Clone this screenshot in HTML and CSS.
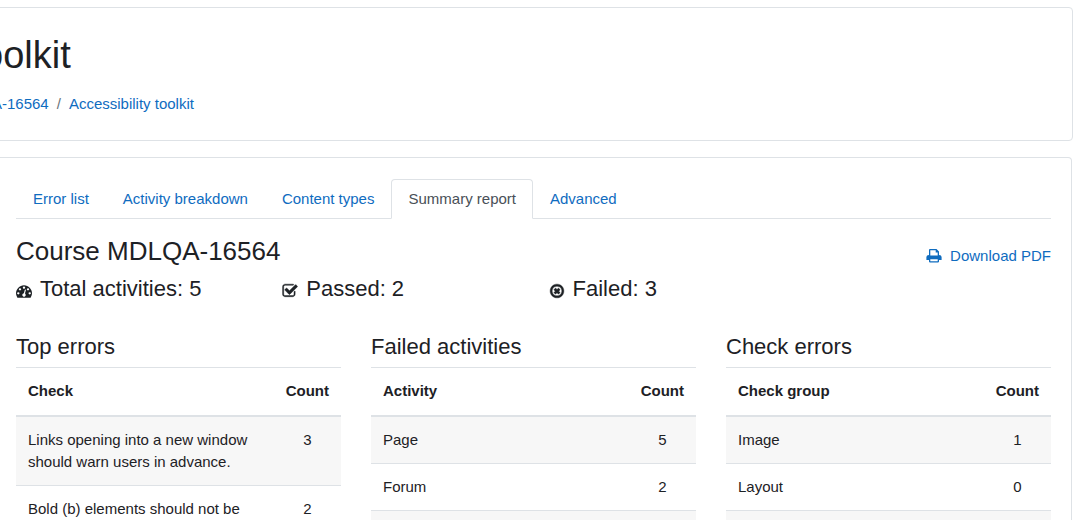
FILE: index.html
```html
<!DOCTYPE html>
<html lang="en">
<head>
<meta charset="utf-8">
<title>Accessibility toolkit</title>
<link rel="stylesheet" href="styles.css">
</head>
<body>
<header class="page-header">
  <h1 class="page-title">oolkit</h1>
  <nav class="breadcrumb" aria-label="Breadcrumb">
    <a href="#">A-16564</a><span class="separator">/</span><a href="#">Accessibility toolkit</a>
  </nav>
</header>
<main class="report">
  <nav class="tabs" aria-label="Reports">
    <a class="tab" href="#">Error list</a>
    <a class="tab" href="#">Activity breakdown</a>
    <a class="tab" href="#">Content types</a>
    <a class="tab active" href="#" aria-current="page">Summary report</a>
    <a class="tab" href="#">Advanced</a>
  </nav>
  <div class="course-bar">
    <h2 class="course-title">Course MDLQA-16564</h2>
    <a class="download" href="#"><svg class="icon" viewBox="0 0 16 16" aria-hidden="true"><path fill-rule="evenodd" d="M3 7V2Q3 1 4 1H10.5L13 3.5V7Q15.6 7 15.6 9V12H13V13.6Q13 14.4 12.200 14.400H3.800Q3 14.400 3 13.600V12H.4V9Q.4 7 3 7zM4.300 2.300V7.500H11.700V4.500H9.700V2.300zM4.300 11.200V13.200H11.700V11.200z"/></svg>Download PDF</a>
  </div>
  <div class="stats">
    <div class="stat"><svg class="icon" viewBox="0 0 1792 1792" aria-hidden="true"><path d="M384 1152q0-53-37.5-90.5t-90.5-37.5-90.5 37.5-37.5 90.5 37.5 90.5 90.5 37.5 90.5-37.5 37.5-90.5zm192-448q0-53-37.5-90.5t-90.5-37.5-90.5 37.5-37.5 90.5 37.5 90.5 90.5 37.5 90.5-37.5 37.5-90.5zm428 481l101-382q6-26-7.5-48.5t-38.5-29.5-48 6.5-30 39.5l-101 382q-60 5-107 43.5t-63 98.5q-20 77 20 146t117 89 146-20 89-117q16-60-6-117t-72-91zm660-33q0-53-37.5-90.5t-90.5-37.5-90.5 37.5-37.5 90.5 37.5 90.5 90.5 37.5 90.5-37.5 37.5-90.5zm-640-640q0-53-37.5-90.5t-90.5-37.5-90.5 37.5-37.5 90.5 37.5 90.5 90.5 37.5 90.5-37.5 37.5-90.5zm448 192q0-53-37.5-90.5t-90.5-37.5-90.5 37.5-37.5 90.5 37.5 90.5 90.5 37.5 90.5-37.5 37.5-90.5zm320 448q0 261-141 483-19 29-54 29h-1402q-35 0-54-29-141-221-141-483 0-182 71-348t191-286 286-191 348-71 348 71 286 191 191 286 71 348z"/></svg>Total activities: 5</div>
    <div class="stat"><svg class="icon heavy" viewBox="0 0 1792 1792" aria-hidden="true"><path d="M1472 930v318q0 119-84.5 203.5t-203.5 84.5h-832q-119 0-203.5-84.5t-84.5-203.5v-832q0-119 84.5-203.5t203.5-84.5h832q63 0 117 25 15 7 18 23 3 17-9 29l-49 49q-10 10-23 10-3 0-9-2-23-6-45-6h-832q-66 0-113 47t-47 113v832q0 66 47 113t113 47h832q66 0 113-47t47-113v-254q0-13 9-22l64-64q10-10 23-10 6 0 12 3 20 8 20 29zm231-489l-814 814q-24 24-57 24t-57-24l-430-430q-24-24-24-57t24-57l110-110q24-24 57-24t57 24l263 263 647-647q24-24 57-24t57 24l110 110q24 24 24 57t-24 57z"/></svg>Passed: 2</div>
    <div class="stat"><svg class="icon heavy" viewBox="0 0 1792 1792" aria-hidden="true"><path d="M1225 1095l-146 146q-10 10-23 10t-23-10l-137-137-137 137q-10 10-23 10t-23-10l-146-146q-10-10-10-23t10-23l137-137-137-137q-10-10-10-23t10-23l146-146q10-10 23-10t23 10l137 137 137-137q10-10 23-10t23 10l146 146q10 10 10 23t-10 23l-137 137 137 137q10 10 10 23t-10 23zm215-199q0-148-73-273t-198-198-273-73-273 73-198 198-73 273 73 273 198 198 273 73 273-73 198-198 73-273zm224 0q0 209-103 385.5t-279.5 279.5-385.5 103-385.5-103-279.5-279.5-103-385.5 103-385.5 279.5-279.5 385.5-103 385.5 103 279.5 279.5 103 385.5z"/></svg>Failed: 3</div>
  </div>
  <div class="summaries">
    <section>
      <h3 class="summary-title" id="top-errors">Top errors</h3>
      <table class="summary-table" aria-labelledby="top-errors">
        <thead><tr><th scope="col">Check</th><th class="count" scope="col">Count</th></tr></thead>
        <tbody>
          <tr><td>Links opening into a new window should warn users in advance.</td><td class="count">3</td></tr>
          <tr><td>Bold (b) elements should not be</td><td class="count">2</td></tr>
        </tbody>
      </table>
    </section>
    <section>
      <h3 class="summary-title" id="failed-activities">Failed activities</h3>
      <table class="summary-table" aria-labelledby="failed-activities">
        <thead><tr><th scope="col">Activity</th><th class="count" scope="col">Count</th></tr></thead>
        <tbody>
          <tr><td>Page</td><td class="count">5</td></tr>
          <tr><td>Forum</td><td class="count">2</td></tr>
          <tr><td></td><td class="count"></td></tr>
        </tbody>
      </table>
    </section>
    <section>
      <h3 class="summary-title" id="check-errors">Check errors</h3>
      <table class="summary-table" aria-labelledby="check-errors">
        <thead><tr><th scope="col">Check group</th><th class="count" scope="col">Count</th></tr></thead>
        <tbody>
          <tr><td>Image</td><td class="count">1</td></tr>
          <tr><td>Layout</td><td class="count">0</td></tr>
          <tr><td></td><td class="count"></td></tr>
        </tbody>
      </table>
    </section>
  </div>
</main>
</body>
</html>
```

FILE: styles.css
```css
* {
  box-sizing: border-box;
}

html {
  overflow: hidden;
}

body {
  margin: 0;
  padding-top: 7px;
  background: #fff;
  color: #1d2125;
  font: 15px/22px "Liberation Sans", Arial, sans-serif;
}

a {
  color: #0f6cbf;
  text-decoration: none;
}

h1,
h2,
h3 {
  margin: 0;
  font-weight: 400;
}

.icon {
  width: 16px;
  height: 16px;
  margin-right: 8px;
  fill: currentColor;
}

.icon.heavy {
  stroke: currentColor;
  stroke-width: 50;
}

/* The header card runs past the left edge of the window. */
.page-header {
  margin: 0 9px 16px -19px;
  padding: 24px 20px 25px 0;
  border: 1px solid #dee2e6;
  border-radius: 4px;
}

.page-title {
  font-size: 38px;
  line-height: 46px;
}

.breadcrumb {
  display: flex;
  margin-top: 15px;
  padding-left: 10px;
}

.separator {
  padding: 0 8px;
  color: #6a737b;
}

.report {
  margin-right: 10px;
  padding: 21px 20px 20px 16px;
  border: 1px solid #dee2e6;
  border-left: 0;
  border-top-right-radius: 4px;
}

.tabs {
  display: flex;
  border-bottom: 1px solid #dee2e6;
}

.tab {
  margin-bottom: -1px;
  padding: 8px 16px;
  border: 1px solid transparent;
  border-radius: 4px 4px 0 0;
}

.tab.active {
  border-color: #dee2e6 #dee2e6 #fff;
  background: #fff;
  color: #495057;
}

.course-bar {
  display: flex;
  justify-content: space-between;
  align-items: flex-end;
  margin: 16px 0 8px;
}

.course-title {
  font-size: 26px;
  line-height: 32px;
}

.download {
  display: flex;
  align-items: center;
}

.stats {
  display: grid;
  grid-template-columns: repeat(4, 1fr);
  gap: 30px;
  margin-bottom: 30px;
}

.stat,
.summary-title {
  font-size: 22px;
  line-height: 28px;
}

.stat {
  display: flex;
  align-items: center;
}

.stat .icon {
  margin-top: 4px;
}

.summaries {
  display: grid;
  grid-template-columns: repeat(3, 1fr);
  gap: 30px;
}

.summary-title {
  margin-bottom: 6px;
}

.summary-table {
  width: 100%;
  border-collapse: collapse;
}

.summary-table th,
.summary-table td {
  height: 47px;
  padding: 12px;
  border-top: 1px solid #dee2e6;
  text-align: left;
  vertical-align: top;
}

.summary-table th {
  padding-bottom: 13px;
  border-bottom: 2px solid #dee2e6;
}

.summary-table tbody tr:nth-child(odd) {
  background: #f7f7f7;
}

.summary-table .count {
  width: 67px;
  text-align: center;
}
```
